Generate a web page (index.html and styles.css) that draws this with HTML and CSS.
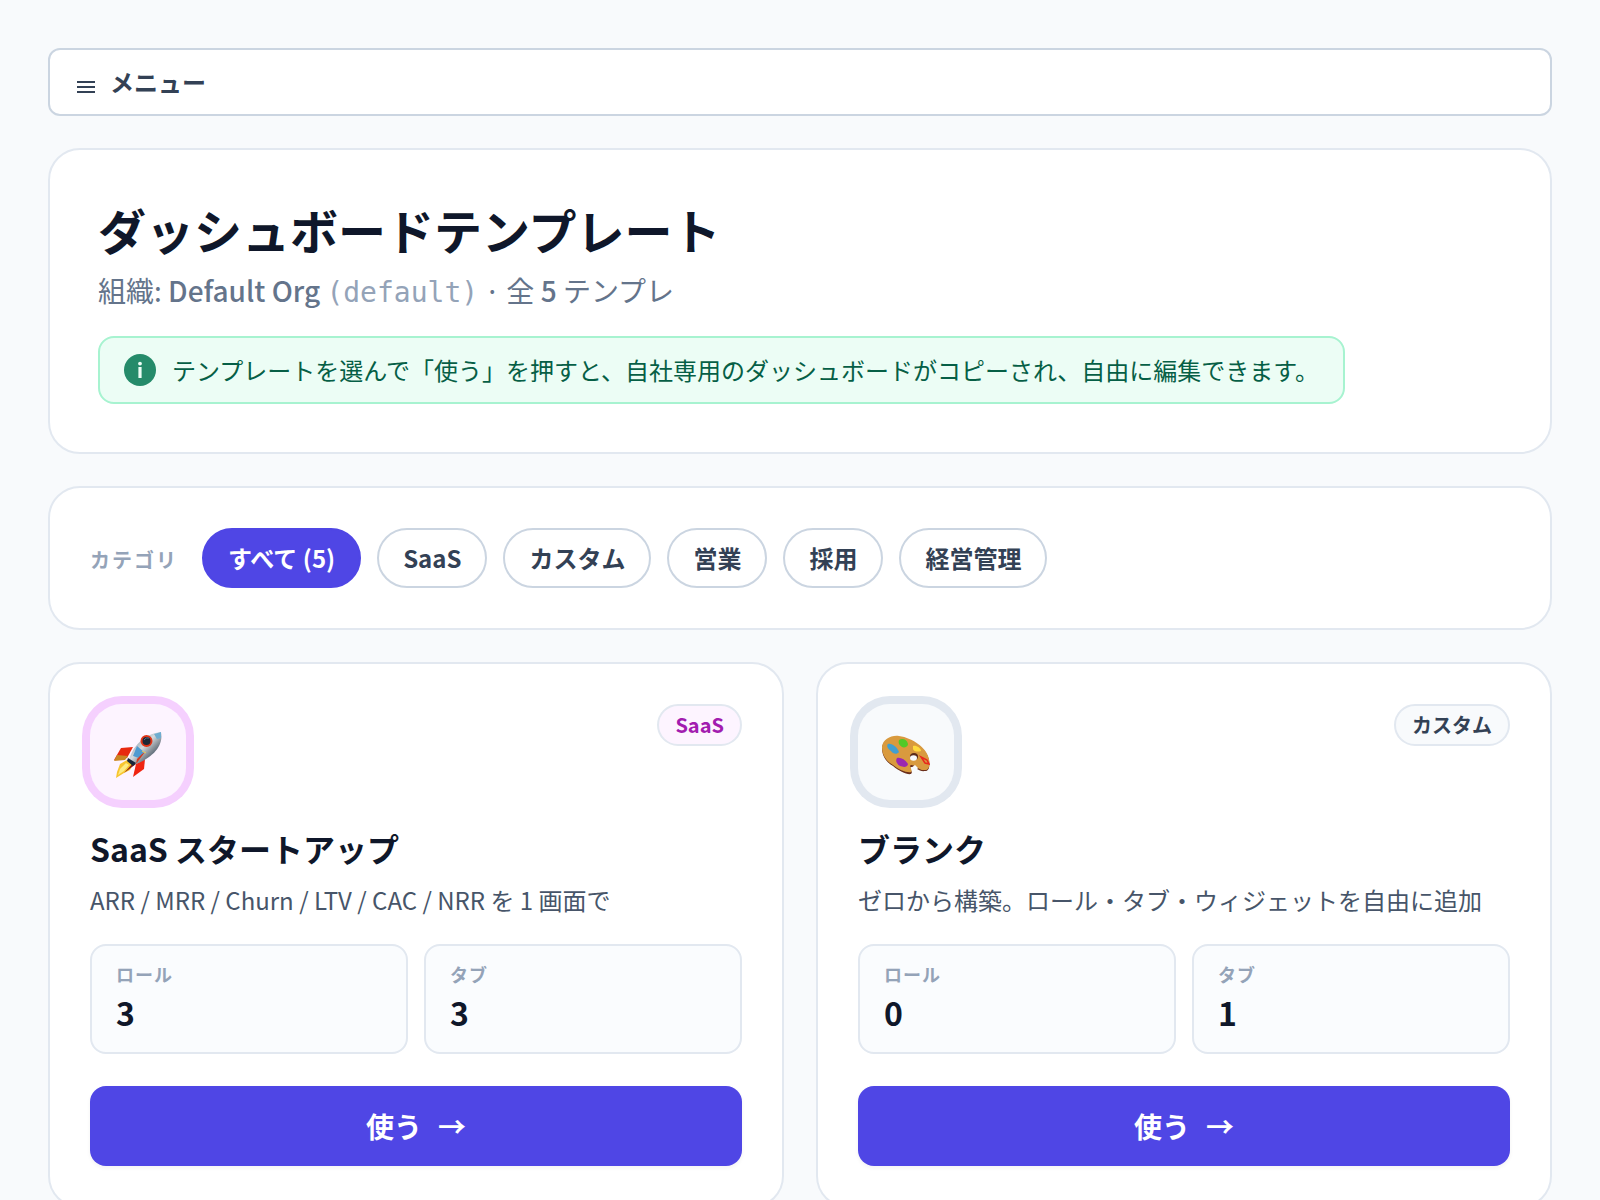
FILE: index.html
```html
<!DOCTYPE html>
<html lang="ja">
<head>
<meta charset="utf-8">
<meta name="viewport" content="width=device-width, initial-scale=1">
<title>ダッシュボードテンプレート</title>
<link rel="stylesheet" href="styles.css">
</head>
<body>
<main class="page">
  <button class="menu" type="button">
    <svg class="menu-icon" viewBox="0 0 24 14" aria-hidden="true"><path d="M3 2h18M3 7h18M3 12h18" fill="none" stroke="currentColor" stroke-width="2"/></svg>
    <span>メニュー</span>
  </button>

  <header class="panel hero">
    <h1 class="hero-title">ダッシュボードテンプレート</h1>
    <p class="hero-sub">組織: <strong>Default Org</strong> <code>(default)</code> · 全 <strong>5</strong> テンプレ</p>
    <p class="notice">
      <svg class="notice-icon" viewBox="0 0 32 32" aria-hidden="true"><circle cx="16" cy="16" r="16" fill="#258b6a"/><circle cx="16" cy="9.6" r="1.9" fill="#ecfdf5"/><path d="M16 13v11" stroke="#ecfdf5" stroke-width="3.2"/></svg>
      <span>テンプレートを選んで「使う」を押すと、自社専用のダッシュボードがコピーされ、自由に編集できます。</span>
    </p>
  </header>

  <nav class="panel filters" aria-label="カテゴリ">
    <span class="filters-label">カテゴリ</span>
    <button class="chip chip-active" type="button">すべて (5)</button>
    <button class="chip" type="button">SaaS</button>
    <button class="chip" type="button">カスタム</button>
    <button class="chip" type="button">営業</button>
    <button class="chip" type="button">採用</button>
    <button class="chip" type="button">経営管理</button>
  </nav>

  <section class="cards">
    <article class="panel card">
      <div class="card-top">
        <div class="tile tile-saas">
          <svg class="emoji" viewBox="0 0 48 48" aria-hidden="true">
            <defs><linearGradient id="hull" x1="0" y1="0" x2="1" y2="1"><stop offset=".2" stop-color="#8fa0ad"/><stop offset=".45" stop-color="#d5dade"/><stop offset=".62" stop-color="#8a939b"/><stop offset=".85" stop-color="#26384c"/></linearGradient></defs>
            <path d="M7 17l12-1-6 11-13 2z" fill="#e8290f"/><path d="M0 30l3-6 11 1-3 4z" fill="#c98724"/>
            <path d="M31 28l-1 10-11 8 3-13z" fill="#f02411"/>
            <path d="M13 29l6 4-3 6-6 3-8 5 1-6 3-8z" fill="#f7c52f"/><path d="M12 32l3 2-5 6-6 4 2-6z" fill="#fdec83"/>
            <path d="M20 31l-10 11 12-9z" fill="#8c1c12"/>
            <path d="M15 29C18 17 29 3 47 1c3 14-9 26-25 32z" fill="url(#hull)"/>
            <path d="M23 15l7 6-5 6-6-2z" fill="#4e9ad0"/><path d="M40 3l7-2 0 6-4 1z" fill="#6eadd0"/>
            <path d="M14 27l8 5-3 3-6-5z" fill="#17253a"/><path d="M31 21l-9 12 1-5 5-5z" fill="#d3381c"/><path d="M28 20l4 2" stroke="#f0cc55"/>
            <circle cx="32.500" cy="10" r="5" fill="#1c2635" stroke="#df3417" stroke-width="2"/><path d="M30 9q2-3 5-2" fill="none" stroke="#587088"/>
          </svg>
        </div>
        <span class="badge badge-saas">SaaS</span>
      </div>
      <h2 class="card-title">SaaS スタートアップ</h2>
      <p class="card-text">ARR / MRR / Churn / LTV / CAC / NRR を 1 画面で</p>
      <dl class="stats">
        <div class="stat"><dt>ロール</dt><dd>3</dd></div>
        <div class="stat"><dt>タブ</dt><dd>3</dd></div>
      </dl>
      <button class="use" type="button"><span>使う</span><span aria-hidden="true">→</span></button>
    </article>

    <article class="panel card">
      <div class="card-top">
        <div class="tile tile-custom">
          <svg class="emoji" viewBox="0 0 48 48" aria-hidden="true">
            <path d="M0 17C1 9 9 5 17 6c14 2 28 12 30 23 1 7 0 11-4 11-6 1-9-4-14-4-3 1 3 4 0 7-4 1-12-3-18-8C4 31 0 25 0 17z" fill="#6b2f1b"/>
            <path d="M0 16C1 8 9 4 17 5c14 2 28 12 30 23 1 7 0 11-4 11-6 1-9-5-14-5-3 1 3 5 0 7-4 1-12-2-18-7C4 30 0 24 0 16z" fill="#d99a3e"/>
            <ellipse cx="32" cy="25.500" rx="4" ry="3.500" fill="#5a2a1a"/>
            <ellipse cx="31.500" cy="27" rx="3.500" ry="2.800" fill="#f8fafc"/>
            <path d="M33 34l-4 3 1 4 4-1 2-3z" fill="#f8fafc"/>
            <path d="M6 13c4-1 9 3 11 8-2 3-6 2-8-1-3-2-5-5-3-7z" fill="#419fd0"/>
            <path d="M17 9c3-2 8-1 9 4 0 3-4 4-6 3-3-2-4-4-3-7z" fill="#50c927"/>
            <path d="M31 15c3-1 8 2 8 5-3 1-7 1-8-2z" fill="#ffda3d"/>
            <path d="M15 27c3-1 8 1 11 6-1 4-5 3-8 2-3-2-5-5-3-8z" fill="#9b28b0"/>
            <path d="M39 26l6 3 2 4-4-1z" fill="#d99a3e" stroke="#e9281c" stroke-width="1.500"/>
          </svg>
        </div>
        <span class="badge badge-custom">カスタム</span>
      </div>
      <h2 class="card-title">ブランク</h2>
      <p class="card-text">ゼロから構築。ロール・タブ・ウィジェットを自由に追加</p>
      <dl class="stats">
        <div class="stat"><dt>ロール</dt><dd>0</dd></div>
        <div class="stat"><dt>タブ</dt><dd>1</dd></div>
      </dl>
      <button class="use" type="button"><span>使う</span><span aria-hidden="true">→</span></button>
    </article>
  </section>
</main>
</body>
</html>
```
FILE: styles.css
```css
* { box-sizing: border-box; }
body, h1, h2, p, dl, dd { margin: 0; }
body {
  background: #f8fafc;
  color: #0f172a;
  font-family: "Noto Sans CJK JP", sans-serif;
  font-size: 24px;
  line-height: 36px;
}
button { font: inherit; cursor: pointer; }

.page {
  display: flex;
  flex-direction: column;
  gap: 32px;
  padding: 48px;
}
.menu {
  display: flex;
  align-items: center;
  gap: 12px;
  padding: 14px 24px;
  border: 2px solid #cbd5e1;
  border-radius: 12px;
  background: #fff;
  color: #334155;
  font-weight: 700;
}
.menu-icon { width: 24px; height: 14px; margin-top: 10px; }

.panel {
  background: #fff;
  border: 2px solid #e2e8f0;
  border-radius: 32px;
}
.hero { padding: 48px; }
.hero-title {
  font-size: 48px;
  line-height: 62px;
  font-weight: 700;
}
.hero-sub {
  margin-top: 8px;
  color: #64748b;
  font-size: 28px;
  line-height: 44px;
}
.hero-sub strong { font-weight: 500; }
.hero-sub code {
  color: #94a3b8;
  font-family: "DejaVu Sans Mono", monospace;
  font-size: 28px;
  line-height: 28px;
}
.notice {
  display: flex;
  align-items: center;
  gap: 16px;
  width: fit-content;
  margin-top: 24px;
  padding: 14px 24px;
  border: 2px solid #a7f3d0;
  border-radius: 16px;
  background: #ecfdf5;
  color: #065f46;
}
.notice-icon { flex: none; width: 32px; height: 32px; }

.filters {
  display: flex;
  flex-wrap: wrap;
  align-items: baseline;
  gap: 16px;
  padding: 40px;
}
.filters-label {
  margin-right: 8px;
  color: #94a3b8;
  font-size: 20px;
  font-weight: 700;
  letter-spacing: 2px;
}
.chip {
  padding: 10px 24px;
  border: 2px solid #cbd5e1;
  border-radius: 30px;
  background: #fff;
  color: #334155;
  font-weight: 700;
}
.chip-active {
  border-color: #4f46e5;
  background: #4f46e5;
  color: #fff;
}

.cards {
  display: grid;
  grid-template-columns: 1fr 1fr;
  gap: 32px;
}
.card { padding: 40px; }
.card-top {
  display: flex;
  align-items: flex-start;
  justify-content: space-between;
}
.tile {
  display: grid;
  place-items: center;
  width: 96px;
  height: 96px;
  border-radius: 32px;
}
.tile-saas { background: #fdf4ff; box-shadow: 0 0 0 8px #f5d0fe; }
.tile-custom { background: #f8fafc; box-shadow: 0 0 0 8px #e2e8f0; }
.emoji { width: 48px; height: 48px; margin-top: 6px; }
.badge {
  padding: 4px 16px;
  border: 2px solid #e2e8f0;
  border-radius: 24px;
  font-size: 20px;
  line-height: 30px;
  font-weight: 700;
}
.badge-saas { background: #fdf4ff; color: #a21caf; }
.badge-custom { background: #f8fafc; color: #334155; }
.card-title {
  margin-top: 24px;
  font-size: 32px;
  line-height: 48px;
  font-weight: 700;
}
.card-text {
  margin-top: 8px;
  color: #475569;
  line-height: 40px;
}
.stats {
  display: grid;
  grid-template-columns: 1fr 1fr;
  gap: 16px;
  margin-top: 24px;
}
.stat {
  padding: 14px 24px 16px;
  border: 2px solid #e2e8f0;
  border-radius: 16px;
  background: #fafcfe;
}
.stat dt {
  color: #94a3b8;
  font-size: 18px;
  line-height: 28px;
  font-weight: 700;
  letter-spacing: 1px;
}
.stat dd {
  font-size: 32px;
  line-height: 48px;
  font-weight: 700;
}
.use {
  display: flex;
  align-items: center;
  justify-content: center;
  gap: 16px;
  width: 100%;
  margin-top: 32px;
  padding: 20px 24px;
  border: 0;
  border-radius: 16px;
  background: #4f46e5;
  box-shadow: 0 2px 4px rgba(15, 23, 42, 0.05);
  color: #fff;
  font-size: 28px;
  line-height: 40px;
  font-weight: 700;
}
```
